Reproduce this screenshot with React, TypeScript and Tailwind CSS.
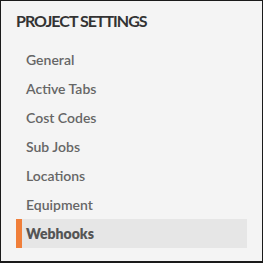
import React from "react";

const items = ["General", "Active Tabs", "Cost Codes", "Sub Jobs", "Locations", "Equipment", "Webhooks"];

export default function App() {
  return (
    <div
      className="w-[263px] h-[263px] border border-b-2 border-[#1a1a1a] bg-[#f4f4f4] pt-[10px]"
      style={{ fontFamily: "Lato, 'Open Sans', sans-serif" }}
    >
      <div className="pl-[15px] text-[16px] leading-[20px] font-bold tracking-[-1px] text-[#333333]">PROJECT SETTINGS</div>
      <div className="mt-[14px] flex flex-col mx-[15px]">
        {items.map((it) => {
          const active = it === "Webhooks";
          return (
            <div
              key={it}
              className={
                "h-[29px] leading-[29px] text-[14px] pl-[4px] border-l-[6px] " +
                (active
                  ? "border-[#f07f3a] bg-[#e6e6e6] font-extrabold text-[#555555]"
                  : "border-transparent font-semibold text-[#666666]")
              }
            >
              {it}
            </div>
          );
        })}
      </div>
    </div>
  );
}
